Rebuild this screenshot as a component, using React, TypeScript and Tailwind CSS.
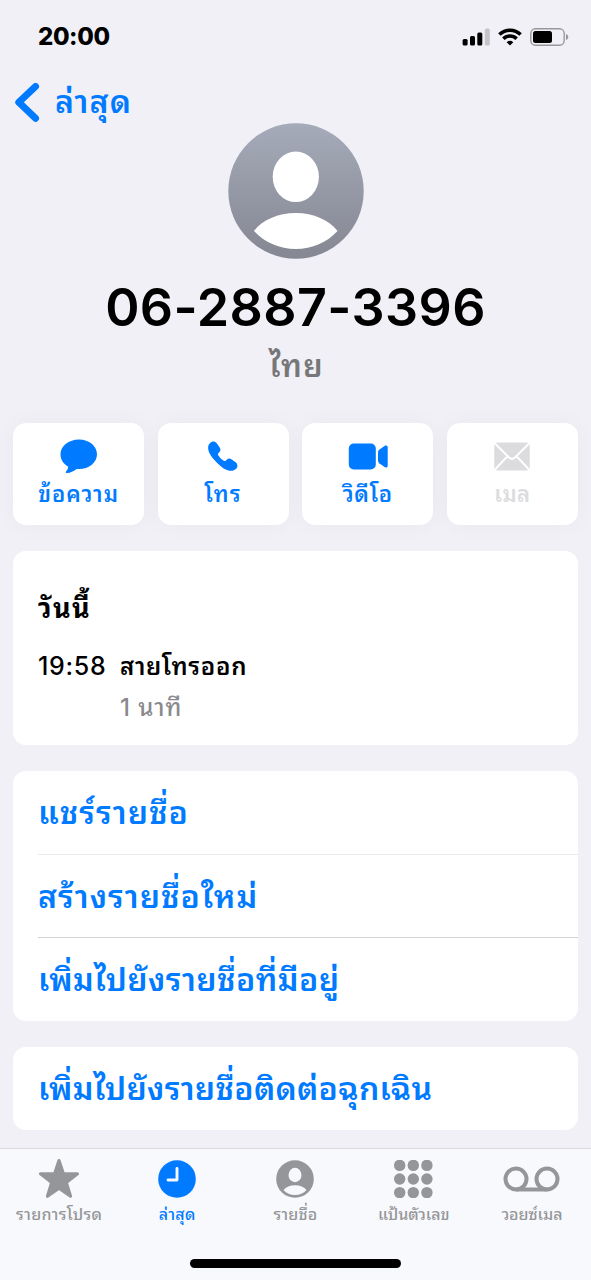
// Call detail screen of the phone app.
//
// The status bar, contact header, action buttons, call log and contact
// options are stacked in one column, with the tab bar fixed to the bottom.

import type { ReactNode } from "react";
import clsx from "clsx";

interface Action {
  label: string;
  icon: ReactNode;
  disabled?: boolean;
  text: string;
}

interface Tab {
  label: string;
  icon: ReactNode;
  active?: boolean;
  text: string;
}

const actions: Action[] = [
  { label: "ข้อความ", icon: <MessageIcon />, text: "tracking-[1px]" },
  { label: "โทร", icon: <PhoneIcon />, text: "tracking-[1.2px]" },
  { label: "วิดีโอ", icon: <VideoIcon />, text: "tracking-[0.8px]" },
  { label: "เมล", icon: <MailIcon />, disabled: true, text: "tracking-[0.4px]" },
];

const options = [
  { label: "แชร์รายชื่อ", text: "tracking-[1.05px]" },
  { label: "สร้างรายชื่อใหม่", text: "tracking-[1.05px]" },
  { label: "เพิ่มไปยังรายชื่อที่มีอยู่", text: "tracking-[0.45px]" },
];

const tabs: Tab[] = [
  { label: "รายการโปรด", icon: <StarIcon />, text: "tracking-[0.3px]" },
  { label: "ล่าสุด", icon: <ClockIcon />, active: true, text: "tracking-[0.3px]" },
  { label: "รายชื่อ", icon: <ContactIcon />, text: "tracking-[0.2px]" },
  { label: "แป้นตัวเลข", icon: <KeypadIcon />, text: "tracking-[-0.1px]" },
  { label: "วอยซ์เมล", icon: <VoicemailIcon />, text: "tracking-[-0.1px]" },
];

function MessageIcon() {
  return (
    <svg width="38" height="35" viewBox="0 0 38 35" fill="currentColor">
      <path d="M19 .5C29.2.5 37 7 37 15.200S29.200 30 19 30c-.8 0-1.600 0-2.300-.1-2.700 2-6.600 3.900-9.700 4.100-1.300.1-1.700-.9-.8-1.800 1.400-1.400 2.100-2.800 1.900-4.600C3.500 25 .5 20.500.5 15.200.5 7 8.800.5 19 .5Z" />
    </svg>
  );
}

function PhoneIcon() {
  return (
    <svg width="30" height="30" viewBox="0 0 30 30" fill="currentColor">
      <path d="M1.800 2.200C4 0 7 .1 8.700 2.300l3 4.300c1.200 1.800 1 3.300-.4 4.700l-1 1c-.5.500-.5 1-.2 1.600 1.500 2.500 3.500 4.500 6 6 .6.300 1.100.3 1.600-.2l1-1c1.400-1.400 2.900-1.600 4.700-.4l4.300 3c2.200 1.700 2.300 4.700.1 6.800-2.300 2.100-5.900 2.400-10.100.4C12.800 26.200 4 17.400 1.500 12.200c-2-4.200-1.800-7.800.3-10Z" />
    </svg>
  );
}

function VideoIcon() {
  return (
    <svg width="40" height="27" viewBox="0 0 40 27" fill="currentColor">
      <rect x=".8" y=".5" width="27" height="26" rx="5" />
      <path d="M30 9.200c0-1 .4-1.700 1.200-2.400l5.300-3.900C38 1.900 39.700 2.500 39.700 4.300v18.400c0 1.800-1.700 2.400-3.200 1.400l-5.300-3.900c-.8-.7-1.200-1.400-1.200-2.400Z" />
    </svg>
  );
}

function MailIcon() {
  return (
    <svg width="36" height="29" viewBox="0 0 36 29" fill="none">
      <rect x=".3" y=".5" width="35.400" height="28" rx="3" fill="currentColor" />
      <path
        d="m1 1.500 14 14q3 2.700 6 0l14-14M1 27.500l12.300-13M35 27.500l-12.300-13"
        stroke="#fff"
        strokeWidth="1.900"
      />
    </svg>
  );
}

function StarIcon() {
  return (
    <svg width="42" height="42" viewBox="0 0 42 42" fill="currentColor">
      <path
        d="m21 2.600 4.400 13.200H39.500l-11.200 8.600 4.200 13.900L21 30.200 9.500 38.300l4.200-13.900L2.500 15.800h14.100Z"
        stroke="currentColor"
        strokeWidth="3.200"
        strokeLinejoin="round"
      />
    </svg>
  );
}

function ClockIcon() {
  return (
    <svg width="38" height="38" viewBox="0 0 38 38" fill="none">
      <circle cx="19" cy="19" r="18.800" fill="currentColor" />
      <path d="M19 8.500V20H10" stroke="#f5f8fd" strokeWidth="2.900" strokeLinecap="round" strokeLinejoin="round" />
    </svg>
  );
}

function ContactIcon() {
  return (
    <svg width="38" height="38" viewBox="0 0 38 38" fill="none">
      <circle cx="19" cy="19" r="18.800" fill="currentColor" />
      <ellipse cx="19" cy="15" rx="6.500" ry="7.200" fill="#f6f8fd" />
      <path d="M7.500 30C10 26.800 14 25.200 19 25.200S28 26.800 30.500 30C27.500 33.200 23.600 35 19 35S10.500 33.200 7.500 30Z" fill="#f6f8fd" />
    </svg>
  );
}

function KeypadIcon() {
  const dots = [5.7, 19.3, 32.9];
  return (
    <svg width="39" height="38" viewBox="0 0 39 38" fill="currentColor">
      {dots.map((x) =>
        dots.map((y) => <circle key={`${x}-${y}`} cx={x} cy={y - 0.3} r="5.700" />),
      )}
    </svg>
  );
}

function VoicemailIcon() {
  return (
    <svg width="57" height="26" viewBox="0 0 57 26" fill="none" stroke="currentColor" strokeWidth="4">
      <circle cx="13" cy="13" r="10.500" />
      <circle cx="44" cy="13" r="10.500" />
      <path d="M13 23.500h31" />
    </svg>
  );
}

function StatusBar() {
  return (
    <div className="flex h-[72px] items-center justify-between pt-px pr-[22px] pl-[38px]">
      <span className="text-[24px] leading-8 font-extrabold tracking-[-0.4px]">20:00</span>
      <div className="flex items-center gap-2">
        <svg width="28" height="18" viewBox="0 0 28 18">
          <rect x=".6" y="11" width="5" height="6.500" rx="1.500" />
          <rect x="8" y="8" width="5" height="9.500" rx="1.500" />
          <rect x="15.300" y="4.500" width="5" height="13" rx="1.500" />
          <rect x="22.800" y=".5" width="5" height="17" rx="1.500" fill="#c5c5c9" />
        </svg>
        <svg width="24" height="18" viewBox="0 0 24 18" fill="none" stroke="#000" strokeWidth="3.600">
          <path d="M1.400 6.500a15.200 15.200 0 0 1 21.200 0" />
          <path d="M5.400 10.700a9.400 9.400 0 0 1 13.200 0" />
          <path d="M12 17.500 8.700 14.200q3.300-2.800 6.600 0Z" fill="#000" stroke="none" />
        </svg>
        <svg width="39" height="18" viewBox="0 0 39 18">
          <rect x=".8" y=".8" width="33.400" height="16.400" rx="4.600" fill="none" stroke="#98989c" strokeWidth="1.400" />
          <rect x="3" y="3" width="19" height="12" rx="2.500" />
          <path d="M36 6c3 1 3 5 0 6Z" fill="#98989c" />
        </svg>
      </div>
    </div>
  );
}

function Avatar() {
  return (
    <svg className="h-[136px] w-[136px]" viewBox="0 0 136 136">
      <defs>
        <linearGradient id="avatar" x1="0" y1="0" x2="0" y2="1">
          <stop offset="0" stopColor="#a5abb9" />
          <stop offset="1" stopColor="#858792" />
        </linearGradient>
      </defs>
      <circle cx="68" cy="68" r="67.700" fill="url(#avatar)" />
      <ellipse cx="67.800" cy="53.800" rx="23.100" ry="25.300" fill="#fff" />
      <path d="M26 108C34 97 50 90 67.800 90S101 97 109.500 108C99 119.500 84 126 67.800 126S36.500 119.500 26 108Z" fill="#fff" />
    </svg>
  );
}

export default function App() {
  return (
    <div className="flex h-[1280px] w-[591px] flex-col overflow-hidden bg-[#f1f0f6] font-['Inter','Noto_Sans_Thai_Looped','Noto_Sans_Thai',sans-serif] text-black">
      <StatusBar />

      {/* Back navigation */}
      <nav className="flex h-[51px] items-start pt-[11px] pl-[15px] text-[#007aff]">
        <svg width="25" height="39" viewBox="0 0 25 39" fill="none">
          <path d="M20.500 3.500 3.800 19.300 20.500 35.300" stroke="currentColor" strokeWidth="7" strokeLinecap="round" strokeLinejoin="round" />
        </svg>
        <span className="ml-[15px] text-[32px] leading-[38px] font-semibold tracking-[1.1px]">ล่าสุด</span>
      </nav>

      {/* Contact header */}
      <header className="flex h-[300px] shrink-0 flex-col items-center">
        <Avatar />
        <h1 className="mt-[17px] text-[52px] leading-[64px] font-semibold tracking-[0.4px]">06-2887-3396</h1>
        <p className="mt-[3px] pl-[2px] text-[31px] leading-[46px] font-semibold tracking-[1px] text-[#77777a]">ไทย</p>
      </header>

      <main className="flex flex-col gap-[26px] px-[13px]">
        <div className="grid h-[102px] grid-cols-4 gap-[13.5px]">
          {actions.map((action) => (
            <button
              key={action.label}
              className={clsx(
                "flex flex-col items-center rounded-[13px] bg-white shadow-[0_0_24px_rgba(0,0,0,0.035)]",
                action.disabled ? "text-[#dcdcde]" : "text-[#007aff]",
              )}
            >
              <span className="mt-[15px] flex h-[36px] items-center">{action.icon}</span>
              <span className={clsx("text-[22px] leading-[40px] font-semibold whitespace-nowrap", action.text)}>
                {action.label}
              </span>
            </button>
          ))}
        </div>

        {/* Call log */}
        <section className="h-[194px] rounded-[13px] bg-white px-[25px] pt-[38px]">
          <h2 className="text-[27px] leading-[40px] font-bold tracking-[1.4px]">วันนี้</h2>
          <div className="mt-[17px] grid grid-cols-[82px_1fr] text-[24px] leading-[41px] font-semibold">
            <span className="text-[25px] font-medium tracking-[0.7px]">19:58</span>
            <span className="tracking-[0.7px]">สายโทรออก</span>
            <span className="col-start-2 font-medium tracking-[0.9px] text-[#8a8a8e]">1 นาที</span>
          </div>
        </section>

        {/* Contact options */}
        <ul className="h-[250px] rounded-[13px] bg-white pl-[25px] text-[32px] font-semibold text-[#007aff]">
          {options.map((option, i) => (
            <li
              key={option.label}
              className={clsx(
                "flex items-center pt-px",
                i === 0 && "h-[84px] border-b border-[#ebebed]",
                i === 1 && "h-[83px] border-b border-[#d3d3d6]",
                i === 2 && "h-[83px]",
              )}
            >
              <span className={clsx("whitespace-nowrap", option.text)}>{option.label}</span>
            </li>
          ))}
        </ul>

        <div className="flex h-[83px] items-center rounded-[13px] bg-white pl-[25px] text-[32px] font-semibold text-[#007aff]">
          <span className="tracking-[0.3px] whitespace-nowrap">เพิ่มไปยังรายชื่อติดต่อฉุกเฉิน</span>
        </div>
      </main>

      {/* Tab bar */}
      <footer className="mt-auto flex h-[132px] shrink-0 flex-col items-center border-t border-[#dadade] bg-[#f8f9fc]">
        <div className="grid h-[110px] w-full grid-cols-5">
          {tabs.map((tab) => (
            <div
              key={tab.label}
              className={clsx("flex flex-col items-center pt-[9px]", tab.active ? "text-[#007aff]" : "text-[#949699]")}
            >
              <span className="flex h-[42px] items-center">{tab.icon}</span>
              <span className={clsx("text-[16px] leading-[28px] font-medium whitespace-nowrap", tab.text)}>
                {tab.label}
              </span>
            </div>
          ))}
        </div>
        <div className="h-[9px] w-[211px] rounded-full bg-black" />
      </footer>
    </div>
  );
}
